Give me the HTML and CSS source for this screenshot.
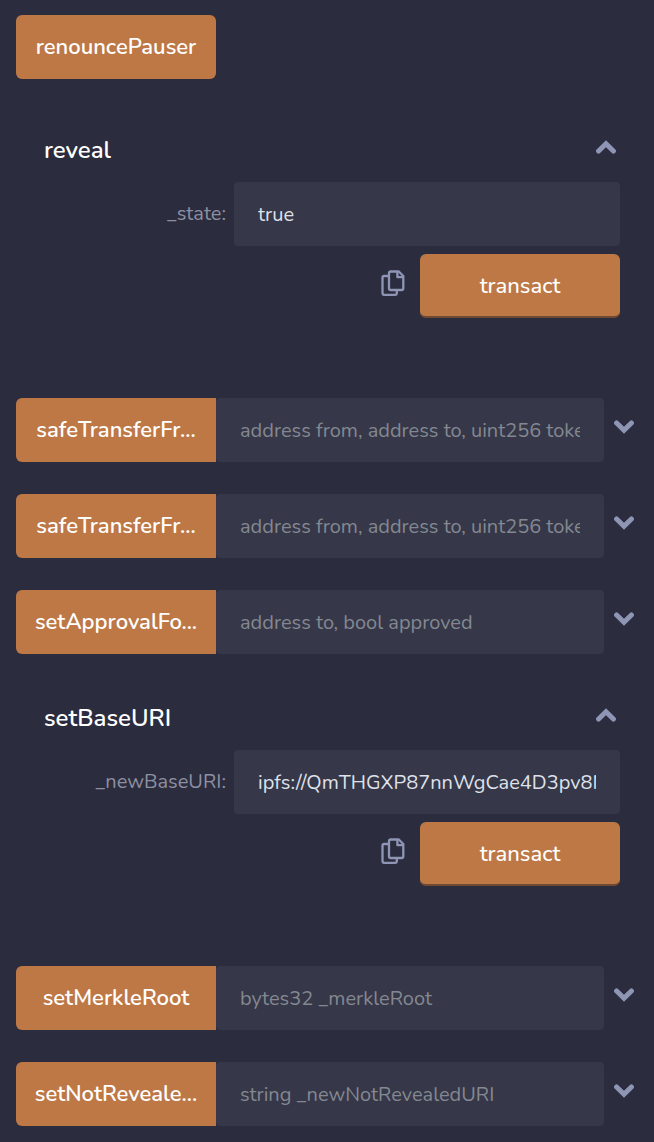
FILE: index.html
```
<!DOCTYPE html>
<html lang="en">
  <head>
    <meta charset="UTF-8" />
    <meta name="viewport" content="width=device-width, initial-scale=1" />
    <title>Deployed contract</title>
    <link rel="stylesheet" href="styles.css">
  </head>
  <body>
    <svg width="0" height="0" class="defs" aria-hidden="true">
      <symbol id="down" viewBox="0 0 20 14">
        <path d="M2.6 3 L10 10.2 L17.4 3" fill="none" stroke="currentColor" stroke-width="5" stroke-linecap="round" />
      </symbol>
      <symbol id="up" viewBox="0 0 20 14">
        <path d="M2.6 11 L10 3.8 L17.4 11" fill="none" stroke="currentColor" stroke-width="5" stroke-linecap="round" />
      </symbol>
      <symbol id="copy" viewBox="0 0 24 26">
        <g fill="none" stroke="currentColor" stroke-width="2.3" stroke-linejoin="round">
          <path d="M7.5 6 H3.2 Q1.5 6 1.5 7.8 V23 Q1.5 24.8 3.2 24.8 H14 Q15.8 24.8 15.8 23 V20.3" />
          <path d="M9.8 1.5 H17.8 L22.3 6 V18.2 Q22.3 20 20.6 20 H9.8 Q8 20 8 18.2 V3.3 Q8 1.5 9.8 1.5 Z" />
          <path d="M16.4 1.8 V7.2 H22" />
        </g>
      </symbol>
    </svg>
    <main class="contract">
      <button type="button" class="call single">renouncePauser</button>

      <section class="expanded">
        <div class="head">
          <h2>reveal</h2>
          <button type="button" class="toggle" aria-label="Collapse reveal"><svg><use href="#up" /></svg></button>
        </div>
        <div class="param">
          <label for="state">_state:</label>
          <input id="state" type="text" value="true" />
        </div>
        <div class="actions">
          <button type="button" class="copy" aria-label="Copy calldata"><svg><use href="#copy" /></svg></button>
          <button type="button" class="transact">transact</button>
        </div>
      </section>

      <div class="row">
        <button type="button" class="call">safeTransferFr...</button>
        <input type="text" aria-label="safeTransferFrom" placeholder="address from, address to, uint256 tokenId" />
        <button type="button" class="toggle" aria-label="Expand safeTransferFrom"><svg><use href="#down" /></svg></button>
      </div>
      <div class="row">
        <button type="button" class="call">safeTransferFr...</button>
        <input type="text" aria-label="safeTransferFrom with data" placeholder="address from, address to, uint256 tokenId, bytes _data" />
        <button type="button" class="toggle" aria-label="Expand safeTransferFrom"><svg><use href="#down" /></svg></button>
      </div>
      <div class="row">
        <button type="button" class="call">setApprovalFo...</button>
        <input type="text" aria-label="setApprovalForAll" placeholder="address to, bool approved" />
        <button type="button" class="toggle" aria-label="Expand setApprovalForAll"><svg><use href="#down" /></svg></button>
      </div>

      <section class="expanded">
        <div class="head">
          <h2>setBaseURI</h2>
          <button type="button" class="toggle" aria-label="Collapse setBaseURI"><svg><use href="#up" /></svg></button>
        </div>
        <div class="param">
          <label for="baseuri">_newBaseURI:</label>
          <input id="baseuri" type="text" value="ipfs://QmTHGXP87nnWgCae4D3pv8N" />
        </div>
        <div class="actions">
          <button type="button" class="copy" aria-label="Copy calldata"><svg><use href="#copy" /></svg></button>
          <button type="button" class="transact">transact</button>
        </div>
      </section>

      <div class="row">
        <button type="button" class="call">setMerkleRoot</button>
        <input type="text" aria-label="setMerkleRoot" placeholder="bytes32 _merkleRoot" />
        <button type="button" class="toggle" aria-label="Expand setMerkleRoot"><svg><use href="#down" /></svg></button>
      </div>
      <div class="row">
        <button type="button" class="call">setNotReveale...</button>
        <input type="text" aria-label="setNotRevealedURI" placeholder="string _newNotRevealedURI" />
        <button type="button" class="toggle" aria-label="Expand setNotRevealedURI"><svg><use href="#down" /></svg></button>
      </div>
    </main>
  </body>
</html>
```
FILE: styles.css
```
* { box-sizing: border-box; }
body {
  margin: 0; background-color: #2b2c3d; color: #fff;
  font-family: Nunito, Lato, sans-serif; font-size: 20px;
}
.defs { display: none; }
button, input { font: inherit; border: 0; margin: 0; }
button { cursor: pointer; }
.contract { padding: 15px 20px 16px 16px; }

.call, .transact {
  flex: none; width: 200px; height: 64px; padding: 0 8px;
  background-color: #bd7845; color: #fff;
  border-radius: 6px; white-space: nowrap;
}
.call { font-size: 22px; font-weight: 600; }
.call:hover, .transact:hover { background-color: #a86a3c; }
.single { display: block; margin-bottom: 39px; }

.row { display: flex; margin-bottom: 32px; }
.row:last-child { margin-bottom: 0; }
.row .call { border-radius: 6px 0 0 6px; }
input {
  flex: 1; min-width: 0; height: 64px; padding: 0 24px;
  background-color: #363748; color: #dfe1ea;
  border-radius: 4px; outline: none;
}
input::placeholder { color: #838891; opacity: 1; }

.toggle {
  flex: none; height: 58px; padding: 0 0 0 10px;
  background: none; color: #8f95b5;
}
.toggle svg { display: block; width: 20px; height: 14px; }

.expanded { padding: 0 14px 0 28px; margin-bottom: 80px; }
.head {
  display: flex; justify-content: space-between;
  height: 64px; padding-right: 4px;
}
.head h2 { margin: 0; font-size: 24px; font-weight: 600; line-height: 64px; }
.param { display: flex; align-items: center; }
.param label {
  width: 190px; padding: 0 8px 2px 0; text-align: right; color: #8d90a2;
}
.actions {
  display: flex; justify-content: flex-end; margin-top: 8px;
}
.transact { padding-top: 2px; font-size: 22px; font-weight: 500; border-bottom: #714b31 solid 2px; }
.copy { height: 58px; padding: 0 15px; background: none; color: #8f95b5; }
.copy svg { display: block; width: 24px; height: 26px; }
```
